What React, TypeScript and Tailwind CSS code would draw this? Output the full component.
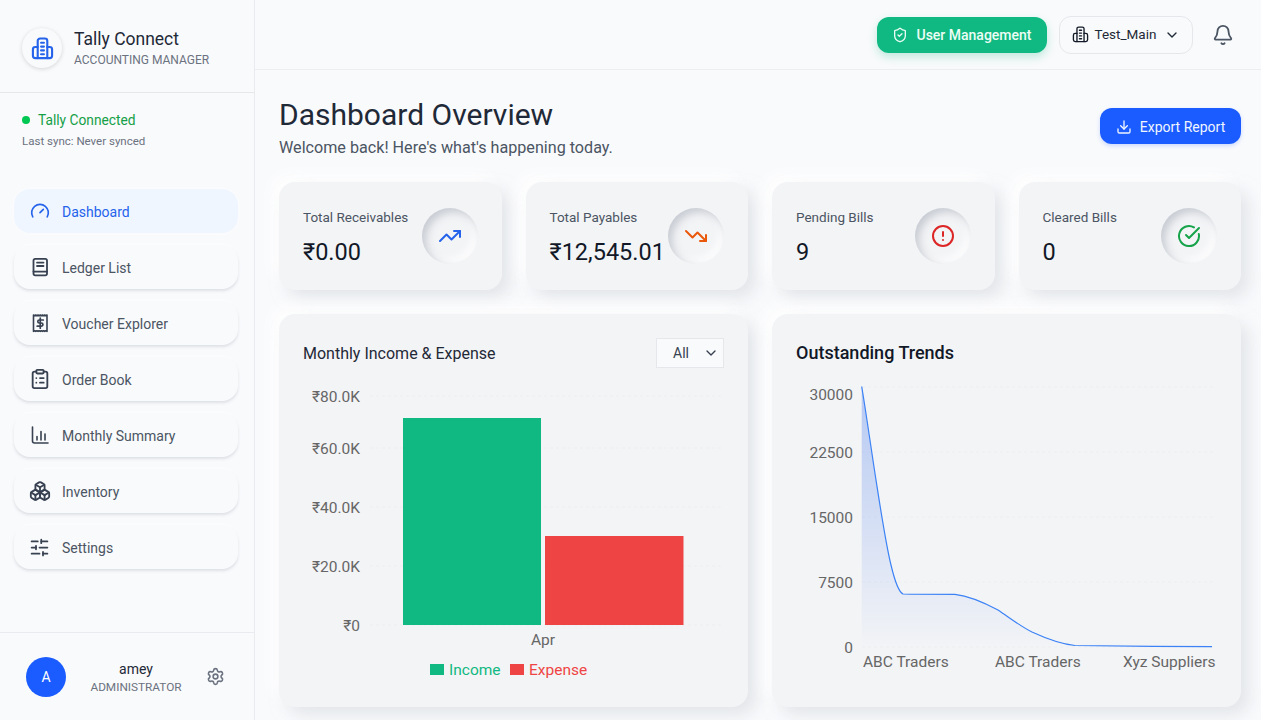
import React from "react";
import { ShieldCheck, ChevronDown, Bell, Download, TrendingUp, TrendingDown, CircleAlert, CircleCheckBig, Settings, ClipboardList, Boxes, SlidersHorizontal, Gauge } from "lucide-react";

function Tower({ className, width = 1.9 }: { className?: string; width?: number }) {
  return (
    <svg viewBox="0 0 24 24" fill="none" stroke="currentColor" strokeWidth={width} strokeLinecap="round" strokeLinejoin="round" className={className}>
      <path d="M7 22V4a2.5 2.5 0 0 1 2.5-2.5h5A2.5 2.5 0 0 1 17 4v18z" />
      <path d="M7 10.5H4.5A2.5 2.5 0 0 0 2 13v6.5A2.5 2.5 0 0 0 4.5 22H7" />
      <path d="M17 10.5h2.5A2.5 2.5 0 0 1 22 13v6.5a2.5 2.5 0 0 1-2.5 2.5H17" />
      <path d="M10.5 6h3M10.5 10h3M10.5 14h3M10.5 18h3" />
    </svg>
  );
}

function LedgerIcon({ className }: { className?: string }) {
  return (
    <svg viewBox="0 0 20 20" fill="none" stroke="currentColor" strokeWidth="1.8" strokeLinecap="round" strokeLinejoin="round" className={className}>
      <rect x="3.5" y="1.8" width="13.5" height="16.6" rx="1.8" />
      <path d="M3.5 14.6h13.5M7 5.6h6.5M7 9h6.5" />
    </svg>
  );
}

function VoucherIcon({ className }: { className?: string }) {
  return (
    <svg viewBox="0 0 20 20" fill="none" stroke="currentColor" strokeLinejoin="round" className={className}>
      <path
        d="M3.5 2l1.125.7 1.125-.7 1.125.7L8 2l1.125.7L10.25 2l1.125.7L12.5 2l1.125.7L14.75 2l1.125.7L17 2v16.4l-1.125-.7-1.125.7-1.125-.7-1.125.7-1.125-.7-1.125.7-1.125-.7-1.125.7-1.125-.7-1.125.7-1.125-.7-1.125.7z"
        strokeWidth="1.6"
      />
      <path d="M13.3 7h-4a1.5 1.5 0 0 0 0 3h2a1.5 1.5 0 0 1 0 3.2H7.2M10.25 5v10.2" strokeWidth="1.7" strokeLinecap="round" />
    </svg>
  );
}

function SummaryIcon({ className }: { className?: string }) {
  return (
    <svg viewBox="0 0 20 20" fill="none" stroke="currentColor" strokeWidth="1.6" strokeLinecap="round" strokeLinejoin="round" className={className}>
      <path d="M2.5 2v14a2 2 0 0 0 2 2H18" />
      <path d="M7 15v-3.5M11 15V6.5M15 15V9" />
    </svg>
  );
}

const nav = [
  { label: "Ledger List", Icon: LedgerIcon, cls: "h-5 w-5" },
  { label: "Voucher Explorer", Icon: VoucherIcon, cls: "h-5 w-5" },
  { label: "Order Book", Icon: ClipboardList, cls: "h-[22px] w-[22px] -mx-px" },
  { label: "Monthly Summary", Icon: SummaryIcon, cls: "h-5 w-5" },
  { label: "Inventory", Icon: Boxes, cls: "h-[22px] w-[22px] -mx-px" },
  { label: "Settings", Icon: SlidersHorizontal, cls: "h-[21px] w-[21px] -ml-px" },
];

const cards = [
  { label: "Total Receivables", value: "₹0.00", Icon: TrendingUp, color: "text-[#2563eb]" },
  { label: "Total Payables", value: "₹12,545.01", Icon: TrendingDown, color: "text-[#ea580c]" },
  { label: "Pending Bills", value: "9", Icon: CircleAlert, color: "text-[#dc2626]" },
  { label: "Cleared Bills", value: "0", Icon: CircleCheckBig, color: "text-[#16a34a]" },
];

const cardShadow = "shadow-[8px_8px_16px_rgba(209,213,219,0.55),-8px_-8px_16px_rgba(255,255,255,0.9)]";
const chartFont = { fontFamily: "Roboto, 'Noto Sans', sans-serif" };

function IncomeChart() {
  const ticks: [string, number][] = [["₹80.0K", 396], ["₹60.0K", 448], ["₹40.0K", 507], ["₹20.0K", 566], ["₹0", 625]];
  return (
    <svg viewBox="279 380 469 310" className="h-[310px] w-[469px]" style={chartFont}>
      {ticks.map(([t, y]) => (
        <g key={t}>
          <line x1="370" x2="724" y1={y} y2={y} stroke="#eceef1" strokeDasharray="3 3" />
          <text x="360" y={y + 5.5} textAnchor="end" fontSize="15.5" fill="#666">{t}</text>
        </g>
      ))}
      <rect x="403" y="418" width="138" height="207" fill="#10b981" />
      <rect x="545" y="536" width="138.5" height="89" fill="#ef4444" />
      <text x="543" y="644.5" textAnchor="middle" fontSize="15.5" fill="#666">Apr</text>
      <rect x="430" y="664" width="14" height="11" fill="#10b981" />
      <text x="449" y="674.5" fontSize="15.5" fill="#10b981">Income</text>
      <rect x="510" y="664" width="14" height="11" fill="#ef4444" />
      <text x="529" y="674.5" fontSize="15.5" fill="#ef4444">Expense</text>
    </svg>
  );
}

function TrendChart() {
  const line = "M861.7 386.5 C866 412 871 448 876 480 C881 512 886 545 891 565 C895 582 899 592 903 594 C915 594.3 940 594.3 955 594.3 C970 596 985 603 998 610 C1010 618 1020 626 1032 632 C1045 638 1060 644 1075 645.5 C1110 646 1170 646.6 1212 646.7";
  const ticks: [string, number, number][] = [["30000", 394, 387], ["22500", 452, 452], ["15000", 517, 517], ["7500", 582, 582], ["0", 647, 647]];
  return (
    <svg viewBox="772 375 469 300" className="h-[300px] w-[469px]" style={chartFont}>
      <defs>
        <linearGradient id="trendFill" x1="0" y1="0" x2="0" y2="1" gradientUnits="objectBoundingBox">
          <stop offset="0" stopColor="#2563eb" stopOpacity="0.3" />
          <stop offset="0.95" stopColor="#2563eb" stopOpacity="0.02" />
          <stop offset="1" stopColor="#2563eb" stopOpacity="0" />
        </linearGradient>
      </defs>
      {ticks.map(([t, y, g]) => (
        <g key={t}>
          <line x1="862" x2="1216" y1={g} y2={g} stroke="#eceef1" strokeDasharray="3 3" />
          <text x="853" y={y + 5.5} textAnchor="end" fontSize="15.5" fill="#666">{t}</text>
        </g>
      ))}
      <path d={line + " L1212 647 L861.7 647 Z"} fill="url(#trendFill)" />
      <path d={line} fill="none" stroke="#3b82f6" strokeWidth="1.2" />
      <text x="863" y="666.5" fontSize="15.5" fill="#666">ABC Traders</text>
      <text x="995" y="666.5" fontSize="15.5" fill="#666">ABC Traders</text>
      <text x="1123" y="666.5" fontSize="15.5" fill="#666">Xyz Suppliers</text>
    </svg>
  );
}

export default function App() {
  return (
    <div className="flex h-[720px] w-[1261px] overflow-hidden bg-[#f9fafc] text-[#111827] font-['Roboto','Noto_Sans',sans-serif]">
      <aside className="flex h-full w-[255px] shrink-0 flex-col border-r border-[#e9ebef]">
        <div className="flex h-[93px] shrink-0 items-center gap-3 border-b border-[#e5e7eb] pl-[22px] pt-1">
          <div className="flex h-10 w-10 items-center justify-center rounded-full bg-[#f9fafb] shadow-[0_1px_4px_rgba(0,0,0,0.15)]">
            <Tower className="h-[23px] w-[23px] text-[#2563eb]" width={2.2} />
          </div>
          <div>
            <div className="text-[17.5px] leading-6 text-[#1f2937]">Tally Connect</div>
            <div className="text-xs leading-[18px] text-[#6b7280]">ACCOUNTING MANAGER</div>
          </div>
        </div>
        <div className="h-[96px] shrink-0 pl-[22px] pt-[17px]">
          <div className="flex items-center gap-2">
            <span className="h-2 w-2 rounded-full bg-[#00c853]" />
            <span className="text-[13.75px] leading-5 text-[#15a047]">Tally Connected</span>
          </div>
          <div className="mt-[3px] text-[11.5px] leading-4 text-[#6b7280]">Last sync: Never synced</div>
        </div>
        <nav className="flex flex-1 flex-col gap-3 pl-[14px] pr-4">
          <div className="flex h-11 items-center gap-3 rounded-2xl bg-[#eff6ff] pl-4 text-sm text-[#2563eb] shadow-[0_0_4px_rgba(255,255,255,0.8)]">
            <Gauge className="h-5 w-5" />
            <span className="pt-px">Dashboard</span>
          </div>
          {nav.map(({ label, Icon, cls }) => (
            <div key={label} className="flex h-11 items-center gap-3 rounded-2xl bg-[#f9fafb] pl-4 text-sm text-[#4b5563] shadow-[0_2px_3px_rgba(209,213,219,0.7),0_-1px_2px_rgba(255,255,255,0.9)]">
              <Icon className={`${cls} text-[#374151]`} />
              <span className="pt-px">{label}</span>
            </div>
          ))}
        </nav>
        <div className="flex h-[88px] shrink-0 items-center border-t border-[#e9ebef] pl-[26px]">
          <div className="flex h-10 w-10 items-center justify-center rounded-full bg-[#1a5cff] text-sm text-white">A</div>
          <div className="ml-[24px] w-[92px] pt-px text-center">
            <div className="text-sm leading-5 text-[#1f2937]">amey</div>
            <div className="text-[11.8px] leading-4 text-[#6b7280]">ADMINISTRATOR</div>
          </div>
          <Settings className="ml-[24px] h-[19px] w-[19px] text-[#6b7280]" />
        </div>
      </aside>

      <div className="flex min-w-0 flex-1 flex-col">
        <header className="flex h-[70px] shrink-0 items-center justify-end border-b border-[#eceef1] pr-[27px]">
          <button className="flex h-9 w-[170px] items-center justify-center gap-2 rounded-xl bg-[#10b981] pt-px text-sm font-medium text-[#ecfdf5] shadow-[0_4px_10px_rgba(16,185,129,0.25)]">
            <ShieldCheck className="h-4 w-4" />
            User Management
          </button>
          <button className="ml-3 flex h-[38px] w-[134px] items-center justify-center gap-[6px] rounded-xl border border-[#e5e7eb] bg-[#f9fafb] text-[13.5px] text-[#1f2937]">
            <Tower className="h-[17px] w-[17px] text-[#111827]" />
            Test_Main
            <ChevronDown className="ml-[2px] h-4 w-4" />
          </button>
          <Bell className="ml-[19px] h-[22px] w-[22px] text-[#4b5563]" />
        </header>

        <main className="flex flex-1 flex-col pl-6 pr-5 pt-6">
          <div className="flex h-[64px] items-start justify-between">
            <div className="pt-px">
              <h1 className="text-[30px] leading-[40px] text-[#1f2937]">Dashboard Overview</h1>
              <p className="mt-px text-[16.15px] leading-[24px] text-[#4b5563]">Welcome back! Here's what's happening today.</p>
            </div>
            <button className="flex h-9 w-[141px] items-center justify-center gap-2 self-center rounded-xl bg-[#1a5cff] pt-px text-sm text-[#f0f5ff] shadow-[0_2px_4px_rgba(26,92,255,0.2)]">
              <Download className="h-4 w-4" />
              Export Report
            </button>
          </div>

          <div className="mt-6 grid grid-cols-4 gap-6">
            {cards.map(({ label, value, Icon, color }) => (
              <div key={label} className={`flex h-[108px] items-center justify-between rounded-2xl bg-[#f3f4f6] pl-6 pr-6 ${cardShadow}`}>
                <div className="min-w-0 pt-[3px]">
                  <div className="whitespace-nowrap text-[13.5px] leading-5 text-[#4b5563]">{label}</div>
                  <div className="mt-[9px] whitespace-nowrap text-[23.5px] leading-8 text-[#111827]">{value}</div>
                </div>
                <div className="flex h-14 w-14 shrink-0 items-center justify-center rounded-full bg-[#f3f4f6] shadow-[inset_4px_4px_8px_rgba(190,195,203,0.85),inset_-4px_-4px_8px_rgba(255,255,255,0.9)]">
                  <Icon className={`h-6 w-6 ${color}`} />
                </div>
              </div>
            ))}
          </div>

          <div className="mt-6 grid grid-cols-2 gap-6">
            <section className={`h-[393px] rounded-2xl bg-[#f3f4f6] ${cardShadow}`}>
              <div className="flex items-center justify-between px-6 pt-6">
                <h2 className="h-[30px] text-base leading-[32px] text-[#1f2937]">Monthly Income & Expense</h2>
                <div className="flex h-[30px] w-[68px] items-center justify-between border border-[#e5e7eb] bg-[#f9fafb] pl-4 pr-1 text-sm text-[#374151]">
                  All
                  <ChevronDown className="h-4 w-4" />
                </div>
              </div>
              <div className="mt-3"><IncomeChart /></div>
            </section>
            <section className={`h-[393px] rounded-2xl bg-[#f3f4f6] ${cardShadow}`}>
              <h2 className="px-6 pt-[25px] text-lg font-medium leading-[28px] text-[#111827]">Outstanding Trends</h2>
              <div className="mt-[8px]"><TrendChart /></div>
            </section>
          </div>
        </main>
      </div>
    </div>
  );
}
